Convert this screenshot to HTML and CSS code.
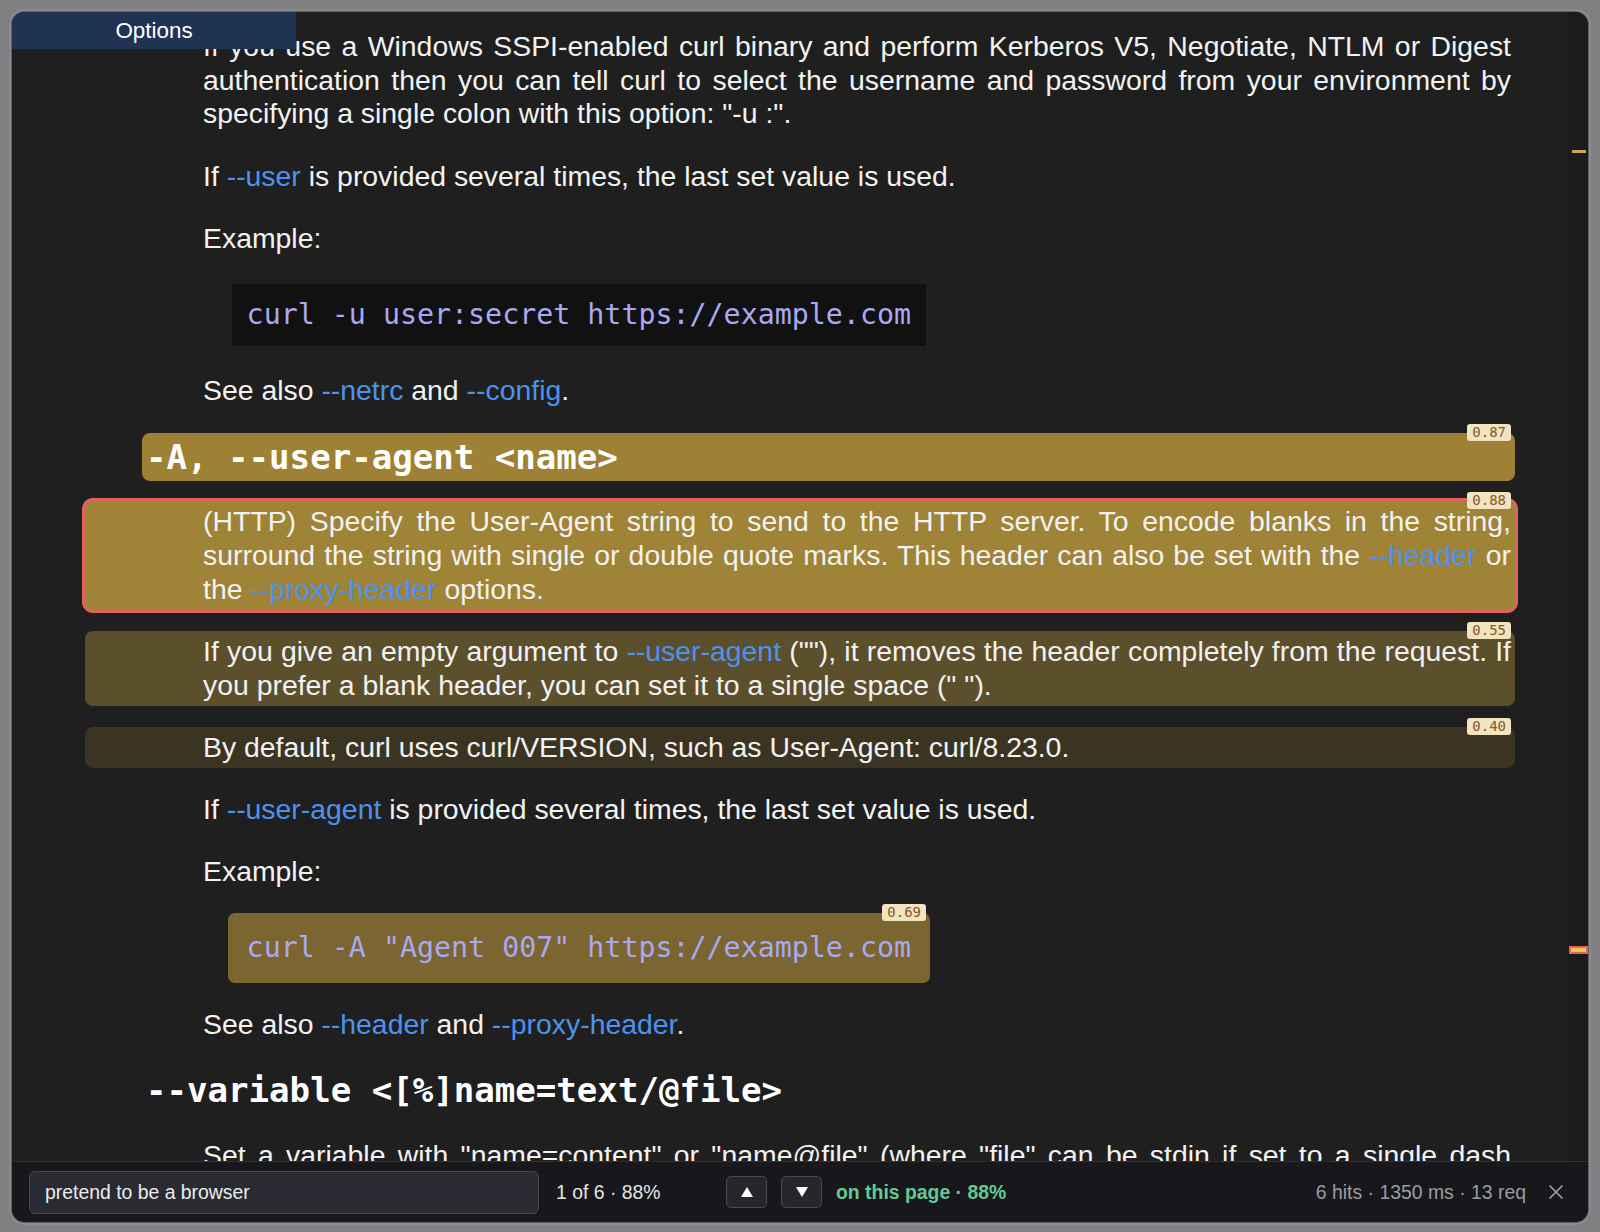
FILE: index.html
```html
<!DOCTYPE html>
<html>
<head>
<meta charset="utf-8">
<title>curl manual</title>
<link rel="stylesheet" href="styles.css">
</head>
<body>
<div class="window">
  <div class="tab">Options</div>
  <div class="main">
    <div class="scroll">
      <div class="content">
        <p class="blk">If you use a Windows SSPI-enabled curl binary and perform Kerberos V5, Negotiate, NTLM or Digest authentication then you can tell curl to select the username and password from your environment by specifying a single colon with this option: "-u :".</p>
        <p class="blk">If <a class="lnk">--user</a> is provided several times, the last set value is used.</p>
        <p class="blk">Example:</p>
        <div class="codewrap"><pre class="code dark">curl -u user:secret https://example.com</pre></div>
        <p class="blk">See also <a class="lnk">--netrc</a> and <a class="lnk">--config</a>.</p>
        <h2 class="head s87">-A, --user-agent &lt;name&gt;<span class="badge">0.87</span></h2>
        <p class="blk s88 sel">(HTTP) Specify the User-Agent string to send to the HTTP server. To encode blanks in the string, surround the string with single or double quote marks. This header can also be set with the <a class="lnk">--header</a> or the <a class="lnk">--proxy-header</a> options.<span class="badge">0.88</span></p>
        <p class="blk s55">If you give an empty argument to <a class="lnk">--user-agent</a> (""), it removes the header completely from the request. If you prefer a blank header, you can set it to a single space (" ").<span class="badge">0.55</span></p>
        <p class="blk s40">By default, curl uses curl/VERSION, such as User-Agent: curl/8.23.0.<span class="badge">0.40</span></p>
        <p class="blk">If <a class="lnk">--user-agent</a> is provided several times, the last set value is used.</p>
        <p class="blk">Example:</p>
        <div class="codewrap s69"><pre class="code">curl -A "Agent 007" https://example.com</pre><span class="badge">0.69</span></div>
        <p class="blk">See also <a class="lnk">--header</a> and <a class="lnk">--proxy-header</a>.</p>
        <h2 class="head">--variable &lt;[%]name=text/@file&gt;</h2>
        <p class="blk"><span class="jline">Set a variable with "name=content" or "name@file" (where "file" can be stdin if set to a single dash</span> (-)). The name is a case sensitive identifier that must consist of no other letters than a-z, A-Z, 0-9 or underscore. The specified content is then associated with this identifier.</p>
      </div>
    </div>
    <div class="rail">
      <span class="mark m1"></span>
      <span class="mark m2"></span>
    </div>
  </div>
  <div class="findbar">
    <div class="input">pretend to be a browser</div>
    <span class="count">1 of 6 · 88%</span>
    <button class="nav"><svg width="12" height="10" viewBox="0 0 12 10"><polygon points="6,0 12,10 0,10" fill="#ffffff"/></svg></button>
    <button class="nav"><svg width="12" height="10" viewBox="0 0 12 10"><polygon points="0,0 12,0 6,10" fill="#ffffff"/></svg></button>
    <span class="onpage">on this page · 88%</span>
    <span class="stats">6 hits · 1350 ms · 13 req</span>
    <svg class="close" width="14" height="14" viewBox="0 0 14 14"><path d="M1 1 L13 13 M13 1 L1 13" stroke="#a3a3a8" stroke-width="1.6" stroke-linecap="round"/></svg>
  </div>
</div>
</body>
</html>
```

FILE: styles.css
```css
html, body {
  margin: 0;
  padding: 0;
}
body {
  width: 1600px;
  height: 1232px;
  background: #808083;
  padding: 12px 12px 0 12px;
  box-sizing: border-box;
  font-family: "Liberation Sans", Arial, sans-serif;
}
.window {
  position: relative;
  width: 1576px;
  height: 1210px;
  border-radius: 13px;
  overflow: hidden;
  background: #1f1f1f;
  box-shadow: 0 0 0 1px #5e5f62, 0 0 0 3px rgba(160,160,164,0.35);
  display: flex;
  flex-direction: column;
}
.tab {
  position: absolute;
  top: 0;
  left: 0;
  z-index: 2;
  width: 284px;
  height: 37px;
  background: #1f3352;
  color: #ffffff;
  font-size: 22.4px;
  display: flex;
  align-items: center;
  justify-content: center;
}
.main {
  flex: 1;
  display: flex;
  min-height: 0;
}
.scroll {
  flex: 1;
  overflow: hidden;
  background: #1f1f1f;
}
.content {
  padding: 14.1px 53px 0 73px;
  display: flex;
  flex-direction: column;
  gap: 20.5px;
  color: #f2f2f2;
  font-size: 28.4px;
  line-height: 33.65px;
}
.blk {
  position: relative;
  margin: 0;
  padding: 4px 4px 4px 118px;
  text-align: justify;
  border-radius: 8px;
}
.jline {
  display: block;
  text-align-last: justify;
}
.lnk {
  color: #4b93ef;
}
.head {
  position: relative;
  margin: 0 0 0 57px;
  padding: 4px;
  font-family: "DejaVu Sans Mono", monospace;
  font-weight: bold;
  font-size: 34.08px;
  line-height: 40.4px;
  color: #ffffff;
  border-radius: 8px;
}
.codewrap {
  position: relative;
  align-self: flex-start;
  margin-left: 142.6px;
  padding: 4px;
  border-radius: 7px;
}
.code {
  margin: 0;
  padding: 14px 15px;
  font-family: "DejaVu Sans Mono", monospace;
  font-size: 28.3px;
  line-height: 34px;
  color: #a9a9f3;
}
.code.dark {
  background: #111111;
}
.s87 { background: #9e8134; }
.s88 { background: #9f8336; }
.s55 { background: #5c4f2c; }
.s40 { background: #3b3423; }
.s69 { background: #7b6531; }
.sel {
  box-shadow: 0 0 0 3px #e0635d;
}
.badge {
  position: absolute;
  top: -9px;
  right: 4px;
  height: 17px;
  padding: 0 5px;
  border-radius: 3px;
  background: #f1e5c1;
  color: #8a5524;
  font-family: "DejaVu Sans Mono", monospace;
  font-weight: normal;
  font-size: 14px;
  line-height: 17px;
  text-align: left;
}
.rail {
  width: 20px;
  flex: none;
  position: relative;
  background: #1b1b1b;
}
.mark {
  position: absolute;
  display: block;
}
.m1 {
  left: 4px;
  top: 138px;
  width: 14px;
  height: 3px;
  background: #c9a857;
}
.m2 {
  left: 1px;
  top: 934px;
  width: 15px;
  height: 4px;
  background: #f2c344;
  border: 2px solid #e0635d;
}
.findbar {
  height: 61px;
  flex: none;
  box-sizing: border-box;
  border-top: 1px solid #303036;
  background: #17171c;
  display: flex;
  align-items: center;
  padding: 0 25px 0 17px;
  font-size: 19.4px;
}
.input {
  width: 510px;
  height: 43px;
  box-sizing: border-box;
  border: 1px solid #4a4a53;
  border-radius: 6px;
  background: #2a2a32;
  color: #ececec;
  display: flex;
  align-items: center;
  padding-left: 15px;
}
.count {
  margin-left: 17px;
  width: 170px;
  color: #e6e6e6;
}
.nav {
  width: 41px;
  height: 32px;
  box-sizing: border-box;
  border: 1px solid #4a4a53;
  border-radius: 5px;
  background: #26262d;
  display: flex;
  align-items: center;
  justify-content: center;
  padding: 0;
  margin-right: 14px;
}
.onpage {
  color: #62cb93;
  font-weight: bold;
}
.stats {
  margin-left: auto;
  color: #9c9ca2;
}
.close {
  margin-left: 23px;
}
```
